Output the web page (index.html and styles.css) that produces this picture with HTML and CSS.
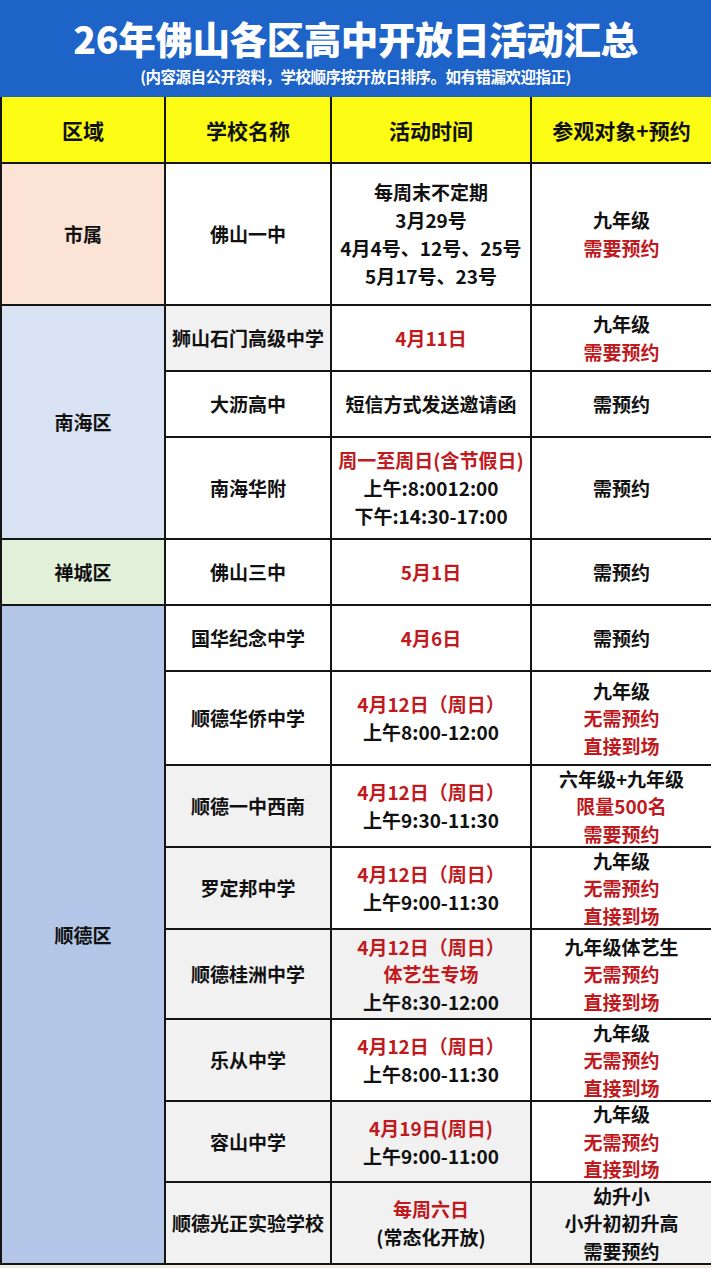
FILE: index.html
```html
<!DOCTYPE html>
<html lang="zh-CN">
<head>
<meta charset="utf-8">
<title>26年佛山各区高中开放日活动汇总</title>
<link rel="stylesheet" href="styles.css">
</head>
<body>
<div class="page">
  <header class="banner">
    <h1 class="title">26年佛山各区高中开放日活动汇总</h1>
    <p class="subtitle">(内容源自公开资料，学校顺序按开放日排序。如有错漏欢迎指正)</p>
  </header>
  <div class="table">
    <div class="cell head first"><div class="in">区域</div></div>
    <div class="cell head"><div class="in">学校名称</div></div>
    <div class="cell head"><div class="in">活动时间</div></div>
    <div class="cell head last"><div class="in">参观对象+预约</div></div>

    <div class="cell first area-city"><div class="in">市属</div></div>
    <div class="cell"><div class="in">佛山一中</div></div>
    <div class="cell"><div class="in">每周末不定期<br>3月29号<br>4月4号、12号、25号<br>5月17号、23号</div></div>
    <div class="cell last"><div class="in">九年级<br><span class="red">需要预约</span></div></div>

    <div class="cell first area-nh span3"><div class="in">南海区</div></div>
    <div class="cell gray"><div class="in">狮山石门高级中学</div></div>
    <div class="cell"><div class="in red">4月11日</div></div>
    <div class="cell last"><div class="in">九年级<br><span class="red">需要预约</span></div></div>

    <div class="cell"><div class="in">大沥高中</div></div>
    <div class="cell"><div class="in">短信方式发送邀请函</div></div>
    <div class="cell last"><div class="in">需预约</div></div>

    <div class="cell"><div class="in">南海华附</div></div>
    <div class="cell"><div class="in"><span class="red">周一至周日(含节假日)</span><br>上午:8:0012:00<br>下午:14:30-17:00</div></div>
    <div class="cell last"><div class="in">需预约</div></div>

    <div class="cell first area-cc"><div class="in">禅城区</div></div>
    <div class="cell"><div class="in">佛山三中</div></div>
    <div class="cell"><div class="in red">5月1日</div></div>
    <div class="cell last"><div class="in">需预约</div></div>

    <div class="cell first area-sd span8"><div class="in">顺德区</div></div>
    <div class="cell"><div class="in">国华纪念中学</div></div>
    <div class="cell"><div class="in red">4月6日</div></div>
    <div class="cell last"><div class="in">需预约</div></div>

    <div class="cell"><div class="in">顺德华侨中学</div></div>
    <div class="cell"><div class="in"><span class="red">4月12日（周日）</span><br>上午8:00-12:00</div></div>
    <div class="cell last tight"><div class="in">九年级<br><span class="red">无需预约<br>直接到场</span></div></div>

    <div class="cell gray"><div class="in">顺德一中西南</div></div>
    <div class="cell"><div class="in"><span class="red">4月12日（周日）</span><br>上午9:30-11:30</div></div>
    <div class="cell last tight"><div class="in">六年级+九年级<br><span class="red">限量500名<br>需要预约</span></div></div>

    <div class="cell gray"><div class="in">罗定邦中学</div></div>
    <div class="cell"><div class="in"><span class="red">4月12日（周日）</span><br>上午9:00-11:30</div></div>
    <div class="cell last tight"><div class="in">九年级<br><span class="red">无需预约<br>直接到场</span></div></div>

    <div class="cell gray"><div class="in">顺德桂洲中学</div></div>
    <div class="cell gray tight"><div class="in"><span class="red">4月12日（周日）<br>体艺生专场</span><br>上午8:30-12:00</div></div>
    <div class="cell last tight"><div class="in">九年级体艺生<br><span class="red">无需预约<br>直接到场</span></div></div>

    <div class="cell gray"><div class="in">乐从中学</div></div>
    <div class="cell"><div class="in"><span class="red">4月12日（周日）</span><br>上午8:00-11:30</div></div>
    <div class="cell last tight"><div class="in">九年级<br><span class="red">无需预约<br>直接到场</span></div></div>

    <div class="cell gray"><div class="in">容山中学</div></div>
    <div class="cell gray"><div class="in"><span class="red">4月19日(周日)</span><br>上午9:00-11:00</div></div>
    <div class="cell last tight"><div class="in">九年级<br><span class="red">无需预约<br>直接到场</span></div></div>

    <div class="cell gray"><div class="in">顺德光正实验学校</div></div>
    <div class="cell gray"><div class="in"><span class="red">每周六日</span><br>(常态化开放)</div></div>
    <div class="cell gray last tight"><div class="in">幼升小<br>小升初初升高<br>需要预约</div></div>
  </div>
</div>
</body>
</html>
```

FILE: styles.css
```css
html, body {
  margin: 0;
  padding: 0;
  background: #efebe7;
}

.page {
  width: 711px;
  font-family: "Noto Sans CJK SC", "Noto Sans", sans-serif;
  color: #111;
}

.banner {
  height: 97px;
  background: #1e63c8;
  color: #fff;
  display: flex;
  flex-direction: column;
  align-items: center;
  box-sizing: border-box;
  padding-top: 14px;
}

.title {
  margin: 0;
  font-size: 37.5px;
  line-height: 48px;
  font-weight: 900;
  letter-spacing: -0.4px;
}

.subtitle {
  margin: 3px 0 0;
  font-size: 15.5px;
  line-height: 22px;
  font-weight: 700;
  letter-spacing: -0.5px;
}

.table {
  display: grid;
  grid-template-columns: 166px 166px 200px 179px;
  grid-template-rows: 67px 142px 66px 66px 102px 66px 66px 94px 82px 82px 90px 82px 81px 82px;
  background: #fff;
}

.cell {
  box-sizing: border-box;
  border-right: 2px solid #151515;
  border-bottom: 2px solid #151515;
  display: flex;
  align-items: center;
  justify-content: center;
  text-align: center;
  font-size: 19px;
  font-weight: 700;
  line-height: 28px;
  background: #fff;
  white-space: nowrap;
}

.in {
  text-align: center;
}

.cell.first {
  border-left: 2px solid #151515;
}

.cell.last {
  border-right: none;
}

.cell.head {
  background: #fcfc14;
  font-size: 21px;
}

.cell.tight {
  line-height: 27.5px;
}

.gray {
  background: #f1f1f1;
}

.red {
  color: #bf1a1e;
}

.area-city { background: #fbe4d5; }
.area-nh { background: #d9e2f3; }
.area-cc { background: #e2efd9; }
.area-sd { background: #b4c6e7; }

.span3 { grid-row: span 3; }
.span8 { grid-row: span 8; }
```
